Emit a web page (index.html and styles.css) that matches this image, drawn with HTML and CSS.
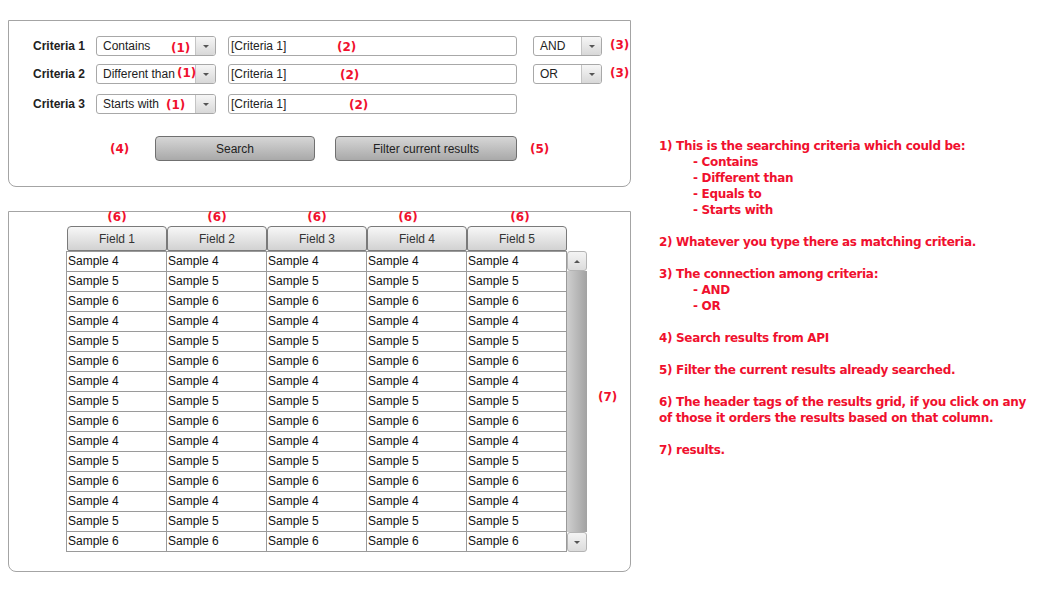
FILE: index.html
```html
<!DOCTYPE html>
<html>
<head>
<meta charset="utf-8">
<title>Search</title>
<link rel="stylesheet" href="styles.css">
</head>
<body>
<div class="page">
  <div class="main">
    <section class="panel criteria">
      <div class="row">
        <span class="label">Criteria 1</span>
        <div class="select op"><span class="val">Contains</span><span class="ann a1-r1">(1)</span><span class="drop"><i class="tri"></i></span></div>
        <div class="input"><span class="val">[Criteria 1]</span><span class="ann a2-r1">(2)</span></div>
        <div class="select conj"><span class="val">AND</span><span class="drop"><i class="tri"></i></span></div>
        <span class="ann3">(3)</span>
      </div>
      <div class="row">
        <span class="label">Criteria 2</span>
        <div class="select op"><span class="val">Different than</span><span class="ann a1-r2">(1)</span><span class="drop"><i class="tri"></i></span></div>
        <div class="input"><span class="val">[Criteria 1]</span><span class="ann a2-r2">(2)</span></div>
        <div class="select conj"><span class="val">OR</span><span class="drop"><i class="tri"></i></span></div>
        <span class="ann3">(3)</span>
      </div>
      <div class="row row-last">
        <span class="label">Criteria 3</span>
        <div class="select op"><span class="val">Starts with</span><span class="ann a1-r3">(1)</span><span class="drop"><i class="tri"></i></span></div>
        <div class="input"><span class="val">[Criteria 1]</span><span class="ann a2-r3">(2)</span></div>
      </div>
      <div class="actions">
        <span class="ann-inline ann4">(4)</span>
        <button class="btn search">Search</button>
        <button class="btn filter">Filter current results</button>
        <span class="ann-inline ann5">(5)</span>
      </div>
    </section>

    <section class="panel results">
      <div class="tags">
        <span class="tag">(6)</span><span class="tag">(6)</span><span class="tag">(6)</span><span class="tag t4">(6)</span><span class="tag t5">(6)</span>
      </div>
      <div class="headers">
        <div class="hdr">Field 1</div><div class="hdr">Field 2</div><div class="hdr">Field 3</div><div class="hdr">Field 4</div><div class="hdr">Field 5</div>
      </div>
      <div class="body-row">
        <div class="table">
          <div class="cell">Sample 4</div><div class="cell">Sample 4</div><div class="cell">Sample 4</div><div class="cell">Sample 4</div><div class="cell">Sample 4</div>
          <div class="cell">Sample 5</div><div class="cell">Sample 5</div><div class="cell">Sample 5</div><div class="cell">Sample 5</div><div class="cell">Sample 5</div>
          <div class="cell">Sample 6</div><div class="cell">Sample 6</div><div class="cell">Sample 6</div><div class="cell">Sample 6</div><div class="cell">Sample 6</div>
          <div class="cell">Sample 4</div><div class="cell">Sample 4</div><div class="cell">Sample 4</div><div class="cell">Sample 4</div><div class="cell">Sample 4</div>
          <div class="cell">Sample 5</div><div class="cell">Sample 5</div><div class="cell">Sample 5</div><div class="cell">Sample 5</div><div class="cell">Sample 5</div>
          <div class="cell">Sample 6</div><div class="cell">Sample 6</div><div class="cell">Sample 6</div><div class="cell">Sample 6</div><div class="cell">Sample 6</div>
          <div class="cell">Sample 4</div><div class="cell">Sample 4</div><div class="cell">Sample 4</div><div class="cell">Sample 4</div><div class="cell">Sample 4</div>
          <div class="cell">Sample 5</div><div class="cell">Sample 5</div><div class="cell">Sample 5</div><div class="cell">Sample 5</div><div class="cell">Sample 5</div>
          <div class="cell">Sample 6</div><div class="cell">Sample 6</div><div class="cell">Sample 6</div><div class="cell">Sample 6</div><div class="cell">Sample 6</div>
          <div class="cell">Sample 4</div><div class="cell">Sample 4</div><div class="cell">Sample 4</div><div class="cell">Sample 4</div><div class="cell">Sample 4</div>
          <div class="cell">Sample 5</div><div class="cell">Sample 5</div><div class="cell">Sample 5</div><div class="cell">Sample 5</div><div class="cell">Sample 5</div>
          <div class="cell">Sample 6</div><div class="cell">Sample 6</div><div class="cell">Sample 6</div><div class="cell">Sample 6</div><div class="cell">Sample 6</div>
          <div class="cell">Sample 4</div><div class="cell">Sample 4</div><div class="cell">Sample 4</div><div class="cell">Sample 4</div><div class="cell">Sample 4</div>
          <div class="cell">Sample 5</div><div class="cell">Sample 5</div><div class="cell">Sample 5</div><div class="cell">Sample 5</div><div class="cell">Sample 5</div>
          <div class="cell">Sample 6</div><div class="cell">Sample 6</div><div class="cell">Sample 6</div><div class="cell">Sample 6</div><div class="cell">Sample 6</div>
        </div>
        <div class="scrollbar">
          <div class="sb-btn"><i class="tri up"></i></div>
          <div class="sb-track"></div>
          <div class="sb-btn"><i class="tri"></i></div>
        </div>
        <span class="ann-inline ann7">(7)</span>
      </div>
    </section>
  </div>

  <aside class="notes">
    <div class="note">
      <p>1) This is the searching criteria which could be:</p>
      <ul>
        <li>- Contains</li>
        <li>- Different than</li>
        <li>- Equals to</li>
        <li>- Starts with</li>
      </ul>
    </div>
    <div class="note"><p>2) Whatever you type there as matching criteria.</p></div>
    <div class="note">
      <p>3) The connection among criteria:</p>
      <ul>
        <li>- AND</li>
        <li>- OR</li>
      </ul>
    </div>
    <div class="note"><p>4) Search results from API</p></div>
    <div class="note"><p>5) Filter the current results already searched.</p></div>
    <div class="note"><p>6) The header tags of the results grid, if you click on any<br>of those it orders the results based on that column.</p></div>
    <div class="note"><p>7) results.</p></div>
  </aside>
</div>
</body>
</html>
```

FILE: styles.css
```css
* { box-sizing: border-box; }

body {
  margin: 0;
  background: #ffffff;
  font-family: "Liberation Sans", Arial, sans-serif;
  font-size: 12px;
  color: #222;
}

.page {
  display: flex;
  align-items: flex-start;
  padding: 20px 0 0 8px;
}

.main {
  width: 623px;
  display: flex;
  flex-direction: column;
  gap: 24px;
}

.panel {
  border: 1px solid #a4a4a4;
  border-radius: 0 0 8px 8px;
  background: #fff;
}

/* ---------- criteria panel ---------- */
.criteria {
  height: 167px;
  padding: 15px 0 0 24px;
  display: flex;
  flex-direction: column;
}

.row {
  display: flex;
  align-items: center;
  height: 20px;
}
.row + .row { margin-top: 8px; }
.row.row-last { margin-top: 10px; }

.label {
  width: 63px;
  font-weight: bold;
  color: #222;
}

.select {
  position: relative;
  display: flex;
  align-items: center;
  height: 20px;
  border: 1px solid #a8a8a8;
  border-radius: 3px;
  background: #fff;
  overflow: hidden;
}
.select .val {
  flex: 1;
  padding-left: 6px;
  white-space: nowrap;
}
.select.op { width: 120px; }
.select.conj { width: 69px; margin-left: 16px; }

.drop {
  width: 20px;
  height: 100%;
  display: flex;
  align-items: center;
  justify-content: center;
  border-left: 1px solid #c4c4c4;
  background: linear-gradient(#f6f6f6, #d8d8d8);
}

.tri {
  display: block;
  width: 0;
  height: 0;
  border-left: 3px solid transparent;
  border-right: 3px solid transparent;
  border-top: 3px solid #555;
}
.tri.up {
  border-top: 0;
  border-bottom: 3px solid #555;
}

.input {
  position: relative;
  display: flex;
  align-items: center;
  width: 289px;
  height: 20px;
  margin-left: 12px;
  border: 1px solid #a8a8a8;
  border-radius: 3px;
  background: #fff;
}
.input .val { padding-left: 2px; }

/* annotations */
.ann, .ann3, .ann-inline, .tag, .notes {
  font-family: "DejaVu Sans", Verdana, sans-serif;
  font-weight: bold;
  color: #f0102e;
}
.ann, .ann3, .ann-inline, .tag { font-size: 12px; }

.ann {
  position: absolute;
  top: 2px;
  line-height: 16px;
}
.a1-r1 { left: 74px; top: 3px; }
.a1-r2 { left: 80px; top: 0; }
.a1-r3 { left: 69px; }
.a2-r1 { left: 108px; }
.a2-r2 { left: 111px; }
.a2-r3 { left: 120px; }

.ann3 { margin-left: 8px; margin-top: -3px; }

.actions {
  display: flex;
  align-items: center;
  margin-top: 22px;
  padding-left: 77px;
  height: 25px;
}
.ann4 { width: 45px; }
.btn {
  height: 25px;
  border: 1px solid #707070;
  border-radius: 4px;
  background: linear-gradient(#d6d6d6, #a9a9a9);
  font-family: "Liberation Sans", Arial, sans-serif;
  font-size: 12px;
  color: #222;
  padding: 0;
}
.btn.search { width: 160px; }
.btn.filter { width: 182px; margin-left: 20px; }
.ann5 { margin-left: 13px; }

/* ---------- results panel ---------- */
.results {
  height: 361px;
  padding: 0 0 0 57px;
  display: flex;
  flex-direction: column;
}

.tags {
  display: flex;
  height: 14px;
  padding-left: 1px;
}
.tag {
  width: 100px;
  text-align: center;
  line-height: 10px;
}
.tag.t4 { padding-right: 18px; }
.tag.t5 { padding-left: 6px; }

.headers {
  display: flex;
  padding-left: 1px;
}
.hdr {
  width: 100px;
  height: 25px;
  display: flex;
  align-items: center;
  justify-content: center;
  border: 1px solid #7a7a7a;
  border-radius: 4px 4px 2px 2px;
  background: linear-gradient(#f7f7f7, #d2d2d2);
  color: #333;
}

.body-row {
  display: flex;
  align-items: stretch;
}

.table {
  display: grid;
  grid-template-columns: repeat(5, 100px);
  grid-auto-rows: 20px;
  width: 501px;
  border-left: 1px solid #9a9a9a;
  border-top: 1px solid #9a9a9a;
}
.cell {
  border-right: 1px solid #9a9a9a;
  border-bottom: 1px solid #9a9a9a;
  padding-left: 1px;
  line-height: 19px;
  color: #111;
  white-space: nowrap;
}

.scrollbar {
  width: 20px;
  display: flex;
  flex-direction: column;
}
.sb-btn {
  height: 20px;
  display: flex;
  align-items: center;
  justify-content: center;
  border: 1px solid #b4b4b4;
  border-radius: 3px;
  background: linear-gradient(#f4f4f4, #dcdcdc);
}
.sb-track {
  flex: 1;
  background: linear-gradient(to right, #cfcfcf, #a2a2a2);
}

.ann7 {
  align-self: center;
  margin-left: 11px;
  margin-top: -10px;
}

/* ---------- notes ---------- */
.notes {
  margin: 118px 0 0 28px;
  font-size: 12px;
  line-height: 16px;
  letter-spacing: -0.32px;
  white-space: nowrap;
}
.note { margin-bottom: 16px; }
.notes p { margin: 0; }
.notes ul {
  list-style: none;
  margin: 0;
  padding: 0 0 0 34px;
}
```
